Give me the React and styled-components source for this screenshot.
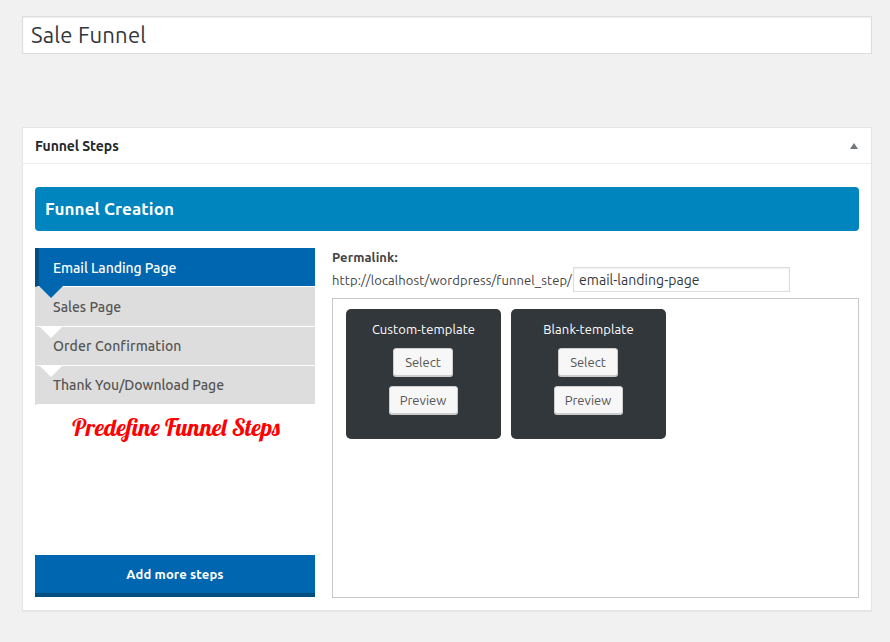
import React, { useState } from "react";
import styled, { createGlobalStyle } from "styled-components";

const GlobalStyle = createGlobalStyle`
  *, *::before, *::after { box-sizing: border-box; }
  body {
    margin: 0;
    background: #f1f1f1;
    color: #444;
    font-family: Ubuntu, "Noto Sans", sans-serif;
    font-size: 13px;
  }
  input, button { font-family: inherit; margin: 0; }
`;

const Page = styled.main`
  height: 642px;
  padding: 16px 18px 0 22px;
  overflow: hidden;
`;

const Field = styled.input`
  display: block;
  border: 1px solid #ddd;
  background: #fff;
  box-shadow: inset 0 1px 2px rgba(0, 0, 0, 0.07);
  color: #32373c;
  outline: none;
  border-radius: 0;
`;

const TitleField = styled(Field)`
  width: 850px;
  height: 38px;
  padding: 0 8px 1px;
  font-size: 22.1px;
  letter-spacing: 0.2px;
`;

const PostBox = styled.section`
  width: 850px;
  height: 484px;
  margin-top: 73px;
  background: #fff;
  border: 1px solid #e5e5e5;
  box-shadow: 0 1px 1px rgba(0, 0, 0, 0.04);
`;

const BoxHeader = styled.header`
  display: flex;
  align-items: center;
  justify-content: space-between;
  height: 36px;
  padding: 0 13px 0 12px;
  border-bottom: 1px solid #eee;
`;

const BoxTitle = styled.h2`
  margin: 0;
  color: #23282d;
  font-size: 14px;
  font-weight: 600;
  line-height: 20px;
  letter-spacing: -0.08px;
`;

const Caret = styled.svg`
  display: block;
  width: 8px;
  height: 6px;
  fill: #72777c;
`;

const BoxBody = styled.div`
  padding: 23px 12px 0;
`;

const Banner = styled.h3`
  margin: 0;
  height: 44px;
  padding-left: 10px;
  border-radius: 4px;
  background: #0085be;
  color: #fff;
  font-size: 17px;
  font-weight: 700;
  line-height: 44px;
  letter-spacing: 0.14px;
`;

const Columns = styled.div`
  display: grid;
  grid-template-columns: 280px 527px;
  column-gap: 17px;
  height: 350px;
  margin-top: 17px;
`;

const StepsColumn = styled.div`
  display: flex;
  flex-direction: column;
  height: 349px;
`;

const Step = styled.button`
  position: relative;
  flex: none;
  height: ${(p) => (p.$tall ? 40 : 39)}px;
  padding: ${(p) => (p.$active ? 1 : 0)}px 0 0 14px;
  border: 0 solid #fff;
  border-left: 4px solid ${(p) => (p.$active ? "#004f80" : "#ddd")};
  border-bottom: 1px solid #fff;
  background: ${(p) => (p.$active ? "#0066af" : "#ddd")};
  color: ${(p) => (p.$active ? "#fff" : "#555")};
  font-size: 14px;
  font-weight: 500;
  line-height: 38px;
  letter-spacing: ${(p) => p.$tracking}px;
  text-align: left;
  white-space: nowrap;

  &::after {
    content: "";
    display: ${(p) => (p.$last ? "none" : "block")};
    position: absolute;
    z-index: 1;
    left: 0;
    top: 100%;
    border: 12px solid transparent;
    border-bottom-width: 0;
    border-top-color: ${(p) => (p.$active ? "#0066af" : "#fff")};
  }
`;

const StepsCaption = styled.p`
  margin: 7px 0 0;
  padding-left: 2px;
  color: #f00;
  font-family: Lobster, "Liberation Serif", serif;
  font-size: 24px;
  font-weight: 400;
  line-height: 30px;
  text-align: center;
  white-space: nowrap;
`;

const AddButton = styled.button`
  height: 42px;
  margin-top: auto;
  padding: 0;
  border: 0;
  border-bottom: 4px solid #004f80;
  background: #0066af;
  color: #fff;
  font-size: 13px;
  font-weight: 700;
  letter-spacing: 0.13px;
`;

const Details = styled.div`
  display: flex;
  flex-direction: column;
`;

const PermalinkLabel = styled.strong`
  height: 19px;
  font-size: 13px;
  font-weight: 700;
  line-height: 19px;
  letter-spacing: 0.1px;
`;

const PermalinkRow = styled.div`
  display: flex;
  height: 25px;
`;

const Url = styled.span`
  width: 241px;
  font-size: 13px;
  line-height: 26px;
  letter-spacing: 0.1px;
  white-space: nowrap;
`;

const SlugField = styled(Field)`
  width: 217px;
  height: 25px;
  padding: 0 5px;
  font-size: 14px;
  letter-spacing: 0.04px;
`;

const Templates = styled.div`
  display: flex;
  gap: 10px;
  align-items: flex-start;
  height: 300px;
  margin-top: 6px;
  padding: 10px 13px;
  border: 1px solid #c8c8c8;
`;

const Card = styled.article`
  display: flex;
  flex-direction: column;
  align-items: center;
  width: 155px;
  height: 130px;
  padding-top: 10px;
  border-radius: 5px;
  background: #32373c;
`;

const CardTitle = styled.span`
  height: 20px;
  margin-bottom: 9px;
  color: #fff;
  font-size: 13px;
  line-height: 20px;
  letter-spacing: 0.08px;
`;

const CardButton = styled.button`
  width: ${(p) => p.$width}px;
  height: 28px;
  margin: 0 1px 10px 0;
  padding: 0;
  border: 1px solid #ccc;
  border-radius: 3px;
  background: #f7f7f7;
  box-shadow: 0 1px 0 #ccc;
  color: #555;
  font-size: 13px;
  line-height: 26px;
`;

const steps = [
  { name: "Email Landing Page", tracking: -0.06 },
  { name: "Sales Page", tracking: 0, tall: true },
  { name: "Order Confirmation", tracking: 0.11 },
  { name: "Thank You/Download Page", tracking: -0.04 },
];

const templates = ["Custom-template", "Blank-template"];

export default function App() {
  const [active, setActive] = useState(0);

  return (
    <Page>
      <GlobalStyle />
      <TitleField defaultValue="Sale Funnel" aria-label="Title" />
      <PostBox>
        <BoxHeader>
          <BoxTitle>Funnel Steps</BoxTitle>
          <Caret viewBox="0 0 8 6" aria-hidden="true">
            <path d="M4 0 8 6H0Z" />
          </Caret>
        </BoxHeader>
        <BoxBody>
          <Banner>Funnel Creation</Banner>
          <Columns>
            <StepsColumn>
              {steps.map((step, i) => (
                <Step
                  key={step.name}
                  $active={i === active}
                  $last={i === steps.length - 1}
                  $tall={step.tall}
                  $tracking={step.tracking}
                  onClick={() => setActive(i)}
                >
                  {step.name}
                </Step>
              ))}
              <StepsCaption>Predefine Funnel Steps</StepsCaption>
              <AddButton>Add more steps</AddButton>
            </StepsColumn>
            <Details>
              <PermalinkLabel>Permalink:</PermalinkLabel>
              <PermalinkRow>
                <Url>http://localhost/wordpress/funnel_step/</Url>
                <SlugField defaultValue="email-landing-page" aria-label="Slug" />
              </PermalinkRow>
              <Templates>
                {templates.map((name) => (
                  <Card key={name}>
                    <CardTitle>{name}</CardTitle>
                    <CardButton $width={60}>Select</CardButton>
                    <CardButton $width={69}>Preview</CardButton>
                  </Card>
                ))}
              </Templates>
            </Details>
          </Columns>
        </BoxBody>
      </PostBox>
    </Page>
  );
}
